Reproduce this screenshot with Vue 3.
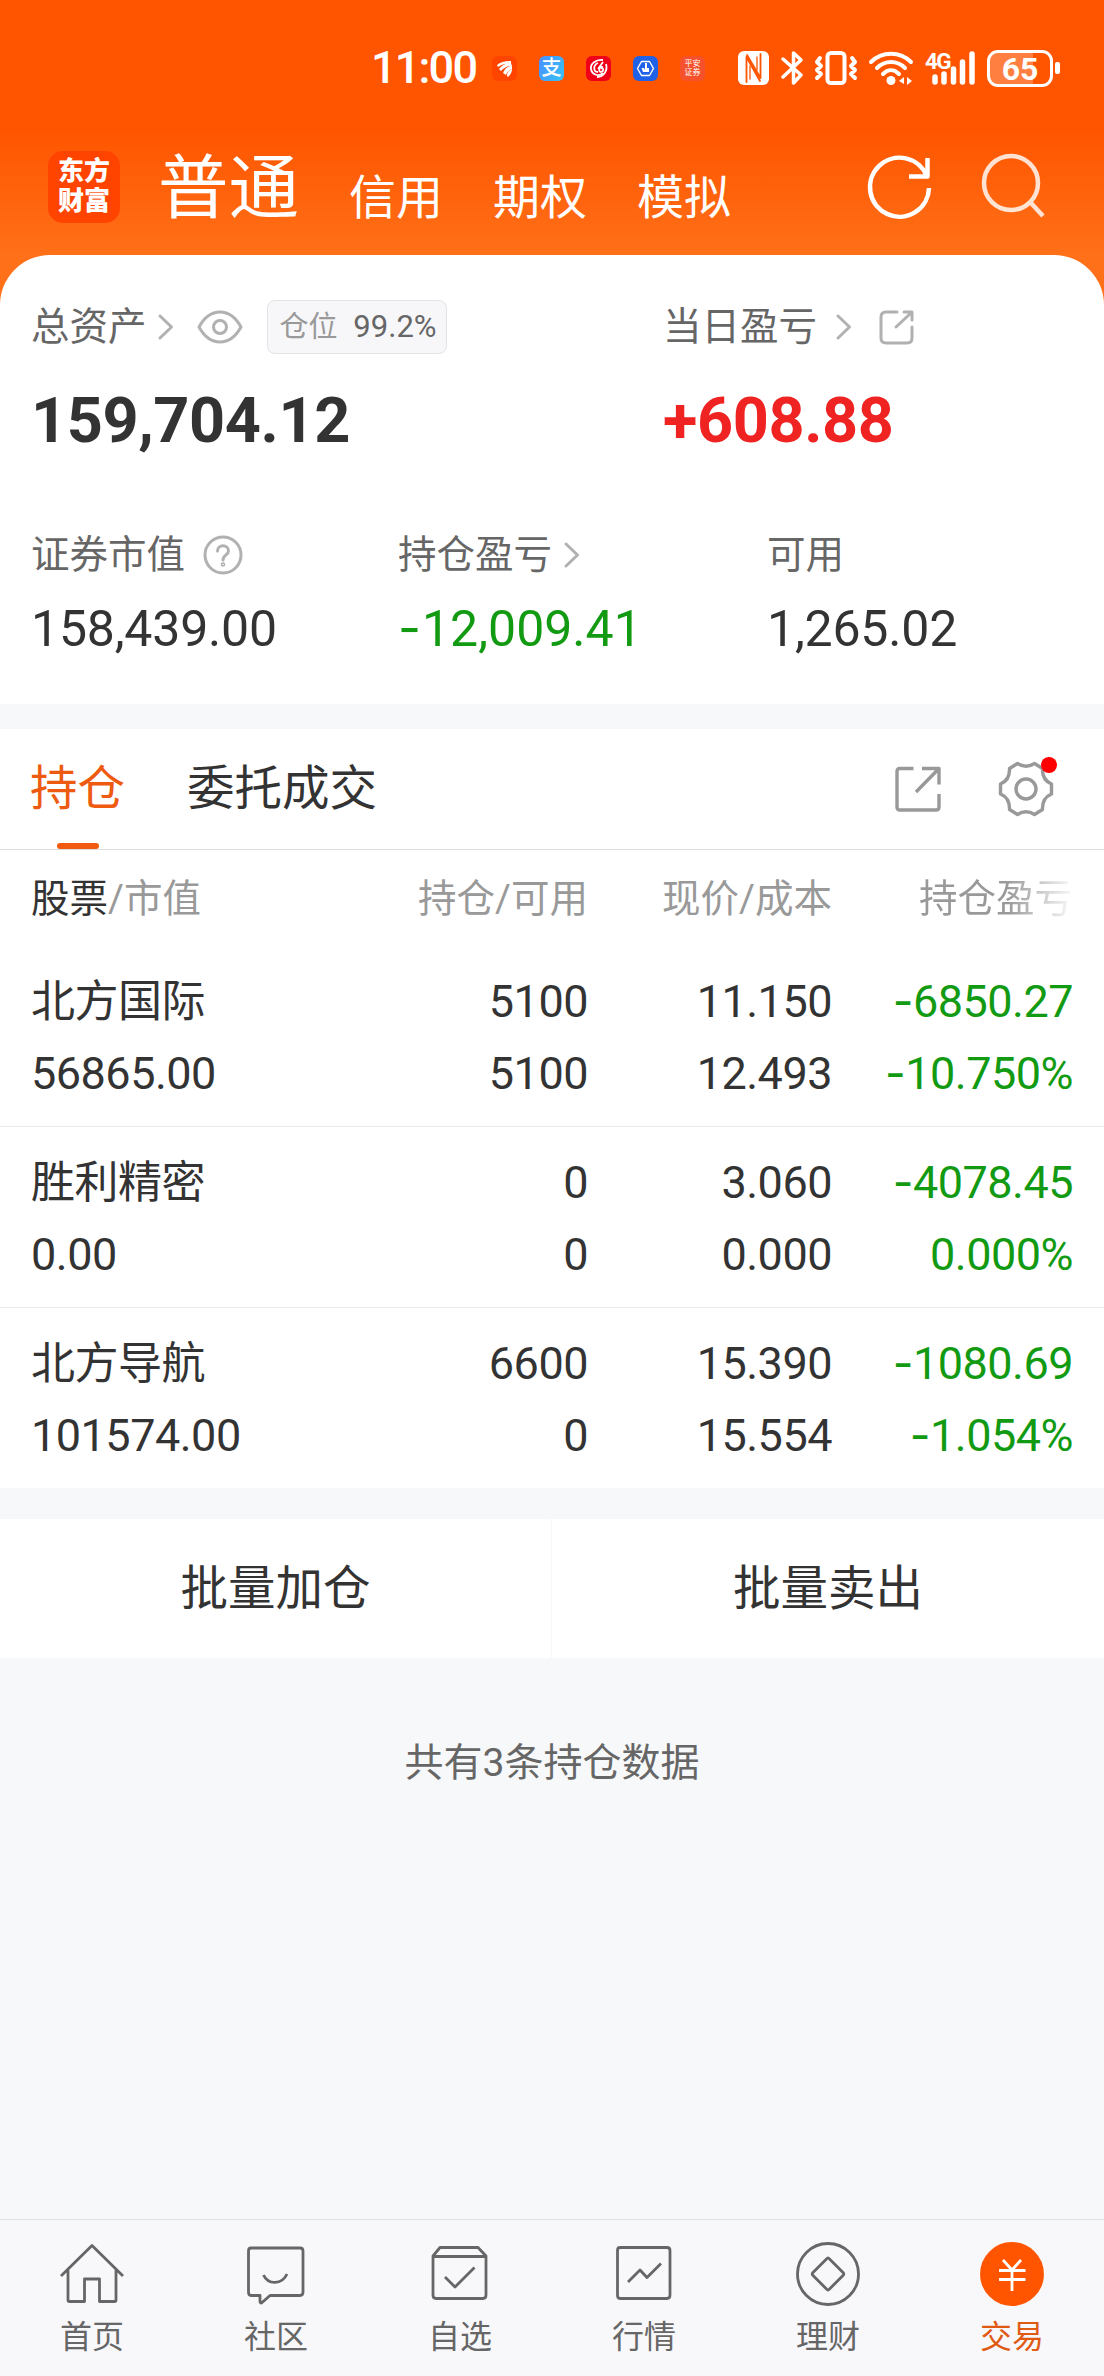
<template>
  <div class="page">
    <header class="top">
      <div class="status">
        <span class="clock">11:00</span>
        <div class="apps">
          <span class="app app-em">
            <svg viewBox="0 0 25 25">
              <path d="M5 9C8 6 13 5 19 5L19 8C13 7 9 9 6 11Z" />
              <path d="M7 13C10 9 14 7 19 7L20 10C15 10 12 12 9 15Z" />
              <path d="M11 17C13 12 16 10 20 10V13C17 14 15 16 14 19Z" />
              <path d="M15 20C15 16 17 14 20 13C20 16 19 18 16 21Z" />
            </svg>
          </span>
          <span class="app app-pay">支</span>
          <span class="app app-red">
            <svg viewBox="0 0 25 25" fill="none" stroke="#fff" stroke-width="1.8">
              <path d="M17 4C10 3 4 8 5 13C6 19 13 21 17 17" />
              <path d="M20 8C22 14 18 21 11 21" />
              <path d="M12 7C7 9 7 16 12 16M17 6L12 13M17 11C13 10 12 16 15 16C18 15 18 12 15 12" />
            </svg>
          </span>
          <span class="app app-blue">
            <svg viewBox="0 0 25 25">
              <path d="M8.5 5.5H16.5L20.5 12.5L16.5 19.5H8.5L4.5 12.5Z" fill="none" stroke="#fff" stroke-width="1.4" />
              <path d="M12 7H14V12H16V16H10L8.5 12H11L12 14Z" />
            </svg>
          </span>
          <span class="app app-pa">平安<br />证券</span>
        </div>
        <div class="signals">
          <svg class="nfc" viewBox="0 0 31 34">
            <rect width="31" height="34" rx="6" fill="#fff" />
            <path d="M8.5 31V6L22 30M22.5 3V27L9 4" fill="none" stroke="#ff5500" stroke-width="1.8" />
            <path d="M12 15V28M19 19V6" fill="none" stroke="#ff5500" stroke-width="1.3" />
          </svg>
          <svg class="bt" viewBox="0 0 22 34">
            <path d="M2 8L20 24L12.500 32V2L20 9L2 26" />
          </svg>
          <svg class="vibrate" viewBox="0 0 42 34">
            <rect x="12.500" y="2" width="17" height="30" rx="3.500" />
            <path d="M5 7L2 11L6 15L2 19L6 23L2 27M37 7L40 11L36 15L40 19L36 23L40 27" />
          </svg>
          <svg class="wifi" viewBox="0 0 44 34">
            <path d="M2 11C13 0 31 0 42 11M8 17C16 9 28 9 36 17M14 23C19 18 25 18 30 23" />
            <circle cx="22" cy="29.500" r="4.500" class="solid" />
            <path d="M30 30L35 26V33ZM43 30L38 26V34Z" class="solid" />
          </svg>
          <svg class="cell" viewBox="0 0 50 34">
            <text x="0" y="17.5">4G</text>
            <path d="M10 26V31M19 23V31M28.500 18V31M37.500 11V31M47 3V31" />
          </svg>
          <div class="battery">65</div>
          <i class="nub"></i>
        </div>
      </div>

      <div class="nav">
        <div class="logo">东方<br />财富</div>
        <nav class="accounts">
          <span class="current">普通</span>
          <span>信用</span>
          <span>期权</span>
          <span>模拟</span>
        </nav>
        <svg class="refresh" viewBox="0 0 66 66">
          <path d="M61 33A29.500 29.500 0 1 1 59 21.500" />
          <path d="M59.500 3V21.500H41" />
        </svg>
        <svg class="search" viewBox="0 0 66 66">
          <circle cx="30" cy="29" r="27" />
          <path d="M50 49L62 62" />
        </svg>
      </div>
    </header>

    <section class="summary">
      <div class="totals">
        <div>
          <div class="label">
            <span>总资产</span>
            <svg class="chevron" viewBox="0 0 16 26"><path d="M2 2L13.500 13L2 24" /></svg>
            <svg class="eye" viewBox="0 0 46 34">
              <path d="M2 17C13 -3 33 -3 44 17C33 37 13 37 2 17Z" />
              <circle cx="23" cy="17" r="6.500" />
            </svg>
            <span class="badge">仓位<b>99.2%</b></span>
          </div>
          <div class="big">159,704.12</div>
        </div>
        <div>
          <div class="label">
            <span>当日盈亏</span>
            <svg class="chevron day" viewBox="0 0 16 26"><path d="M2 2L13.500 13L2 24" /></svg>
            <svg class="share-sm" viewBox="0 0 36 36">
              <path d="M18 3H7Q2 3 2 8V29Q2 34 7 34H28Q33 34 33 29V18M25 3H33V11M33 3L17 18" />
            </svg>
          </div>
          <div class="big up">+608.88</div>
        </div>
      </div>

      <div class="details">
        <div>
          <div class="label">
            <span>证券市值</span>
            <svg class="help" viewBox="0 0 40 40">
              <circle cx="20" cy="20" r="18" />
              <path d="M14.500 16C14.500 9 25.500 9 25.500 16C25.500 20 20 20 20 25" />
              <circle cx="20" cy="29.500" r="0.800" />
            </svg>
          </div>
          <div class="mid">158,439.00</div>
        </div>
        <div>
          <div class="label">
            <span>持仓盈亏</span>
            <svg class="chevron pos" viewBox="0 0 16 26"><path d="M2 2L13.500 13L2 24" /></svg>
          </div>
          <div class="mid down"><i class="minus">-</i>12,009.41</div>
        </div>
        <div>
          <div class="label"><span>可用</span></div>
          <div class="mid">1,265.02</div>
        </div>
      </div>
    </section>

    <section class="holdings">
      <div class="tabs">
        <span class="tab active">持仓</span>
        <span class="tab">委托成交</span>
        <svg class="share" viewBox="0 0 46 46">
          <path d="M18.500 2.500H5Q2 2.500 2 5.500V41Q2 44 5 44H41Q44 44 44 41V28M27 2.500H44V18.500M43 3.500L21 26" />
        </svg>
        <span class="gear">
          <svg viewBox="0 0 56 56">
            <path d="M19.500 2.500Q28 8 36.500 2.500L44.500 7.500Q44 19 53.500 23V33Q44 37 44.500 48.500L36.500 53.500Q28 48 19.500 53.500L11.500 48.500Q12 37 2.500 33V23Q12 19 11.500 7.500Z" />
            <circle cx="28" cy="28" r="10" />
          </svg>
          <i class="dot"></i>
        </span>
      </div>

      <div class="row head">
        <span><em>股票</em>/市值</span>
        <span>持仓/可用</span>
        <span>现价/成本</span>
        <span class="fade">持仓盈亏</span>
      </div>

      <div v-for="item in stocks" :key="item.name" class="row stock">
        <span class="name">{{ item.name }}</span>
        <span>{{ item.amount }}</span>
        <span>{{ item.price }}</span>
        <span class="down"><i class="minus">-</i>{{ item.profit }}</span>
        <span>{{ item.value }}</span>
        <span>{{ item.available }}</span>
        <span>{{ item.cost }}</span>
        <span class="down"><i v-if="item.loss" class="minus">-</i>{{ item.rate }}</span>
      </div>
    </section>

    <div class="batch">
      <button type="button">批量加仓</button>
      <button type="button">批量卖出</button>
    </div>

    <p class="count">共有3条持仓数据</p>

    <footer class="tabbar">
      <div v-for="tab in tabs" :key="tab.label" class="item" :class="{ on: tab.on }">
        <svg viewBox="0 0 64 64">
          <circle v-if="tab.circle" cx="32" cy="32" r="30.500" />
          <path :d="tab.path" />
        </svg>
        <span>{{ tab.label }}</span>
      </div>
    </footer>
  </div>
</template>

<script setup>
const stocks = [
  {
    name: "北方国际",
    value: "56865.00",
    amount: "5100",
    available: "5100",
    price: "11.150",
    cost: "12.493",
    profit: "6850.27",
    rate: "10.750%",
    loss: true,
  },
  {
    name: "胜利精密",
    value: "0.00",
    amount: "0",
    available: "0",
    price: "3.060",
    cost: "0.000",
    profit: "4078.45",
    rate: "0.000%",
    loss: false,
  },
  {
    name: "北方导航",
    value: "101574.00",
    amount: "6600",
    available: "0",
    price: "15.390",
    cost: "15.554",
    profit: "1080.69",
    rate: "1.054%",
    loss: true,
  },
];

const tabs = [
  {
    label: "首页",
    path: "M1 34L32 3.500L63 34M8 28V58Q8 59.500 9.500 59.500H24.500V37H39.500V59.500H54.500Q56 59.500 56 58V28",
  },
  {
    label: "社区",
    path: "M7 6H56Q59 6 59 9V50Q59 53.500 56 53.500H26L17.500 61Q16 61 16 59V53.500H7Q4.500 53.500 4.500 50V9Q4.500 6 7 6M19.500 33C24 43 38 43 43 32",
  },
  {
    label: "自选",
    path: "M5 14L12 5.500H50L58 14V53Q58 56.500 55 56.500H8Q5 56.500 5 53ZM5 14.500H58M17 35L27 45L46.500 25.500",
  },
  {
    label: "行情",
    path: "M8 5.500H55Q58 5.500 58 8.500V53Q58 56.500 55 56.500H8Q5.500 56.500 5.500 53V8.500Q5.500 5.500 8 5.500M16 40L28 28L35 35.500L49 21.500",
  },
  {
    label: "理财",
    circle: true,
    path: "M30.500 17Q32 15 33.500 17L47 30.500Q48.500 32 47 33.500L33.500 47Q32 49 30.500 47L17 33.500Q15.500 32 17 30.500Z",
  },
  {
    label: "交易",
    circle: true,
    on: true,
    path: "M23 18L32 28L41 18M19 28.500H45.500M19 37.500H45.500M32 28V49",
  },
];
</script>

<style>
body {
  background: #f6f7f9;
}
</style>

<style scoped>
.page {
  display: flex;
  flex-direction: column;
  width: 1104px;
  height: 2376px;
  background: #f7f8fa;
  color: #333;
  font-family: Roboto, "Noto Sans CJK SC", sans-serif;
  overflow: hidden;
}

svg {
  display: block;
  flex: none;
  fill: none;
  stroke-linejoin: round;
  overflow: visible;
}

i,
em {
  font-style: normal;
}

.top {
  height: 315px;
  margin-bottom: -60px;
  background: linear-gradient(#ff5500 130px, #ff7018 255px);
  color: #fff;
}

.status {
  display: flex;
  align-items: center;
  height: 136px;
  padding-left: 371px;
}

.clock {
  width: 121px;
  font-size: 45px;
  font-weight: 500;
  letter-spacing: -1.8px;
  line-height: 50px;
}

.apps {
  display: flex;
  gap: 22px;
}

.app {
  width: 25px;
  height: 25px;
  border-radius: 6px;
  text-align: center;
}

.app svg path {
  fill: #fff;
}

.app-em {
  background: #ff4400;
}

.app-pay {
  background: linear-gradient(120deg, #4c8cff, #35c5f5);
  font-size: 20px;
  font-weight: 500;
  line-height: 25px;
}

.app-red {
  background: #f00018;
}

.app-red svg path {
  fill: none;
}

.app-blue {
  background: #1f62e8;
}

.app-blue svg path:first-child {
  fill: none;
}

.app-pa {
  background: #f4512c;
  font-size: 8px;
  line-height: 9px;
  padding-top: 3px;
  box-sizing: border-box;
}

.signals {
  display: flex;
  align-items: center;
  margin-left: 33px;
  stroke-linecap: round;
}

.signals svg {
  height: 34px;
  stroke: #fff;
  stroke-width: 4;
}

.signals .solid {
  fill: #fff;
  stroke: none;
}

.signals .nfc {
  width: 31px;
  stroke: none;
}

.signals .bt {
  width: 22px;
  margin-left: 12px;
  stroke-width: 3.5;
}

.vibrate {
  width: 42px;
  margin-left: 12px;
}

.wifi {
  width: 44px;
  margin-left: 12px;
}

.signals .cell {
  width: 50px;
  margin-left: 12px;
  stroke-width: 5.5;
}

.cell text {
  fill: #fff;
  stroke: none;
  font-size: 22.5px;
  font-weight: 700;
  letter-spacing: -1.6px;
}

.battery {
  width: 66px;
  height: 37px;
  margin-left: 12px;
  box-sizing: border-box;
  border: 3px solid #fff;
  border-radius: 11px;
  background: linear-gradient(90deg, #ff7f40 43px, transparent 43px);
  font-size: 32px;
  font-weight: 700;
  line-height: 32px;
  text-align: center;
}

.nub {
  width: 5px;
  height: 12px;
  margin-left: 2px;
  border-radius: 2px;
  background: #fff;
}

.nav {
  display: flex;
  align-items: center;
  height: 102px;
  padding-left: 48px;
}

.logo {
  width: 72px;
  height: 72px;
  padding-top: 5px;
  box-sizing: border-box;
  border-radius: 15px;
  background: #ff4400;
  font-size: 26px;
  font-weight: 900;
  line-height: 30px;
  text-align: center;
}

.accounts {
  display: flex;
  align-items: last baseline;
  width: 710px;
  margin-left: 38px;
  padding-top: 10px;
  gap: 50px;
  font-size: 47px;
  line-height: 84px;
}

.accounts span:not(.current) {
  padding-top: 2px;
  margin-bottom: -2px;
  transform: translateY(1px);
}

.current {
  font-size: 70.5px;
}

.refresh,
.search {
  width: 66px;
  height: 66px;
  stroke: #fff;
  stroke-width: 4.5;
}

.refresh {
  margin-top: 2px;
}

.search {
  margin-left: 47px;
  opacity: 0.82;
}

.summary {
  height: 449px;
  box-sizing: border-box;
  padding-top: 41px;
  border-radius: 50px 50px 0 0;
  background: #fff;
}

.totals {
  display: grid;
  grid-template-columns: 632px 1fr;
  height: 228px;
  padding-left: 31px;
}

.details {
  display: grid;
  grid-template-columns: 367px 369px 1fr;
  padding-left: 31px;
}

.label {
  display: flex;
  align-items: center;
  height: 62px;
  color: #666;
  font-size: 38.5px;
  line-height: 62px;
}

.label svg {
  stroke: #b1b1b1;
  stroke-width: 3;
  stroke-linecap: round;
}

.chevron {
  width: 16px;
  height: 26px;
  margin-left: 11px;
}

.chevron.day {
  margin-left: 19px;
}

.chevron.pos {
  margin-left: 12px;
}

.eye {
  width: 46px;
  height: 34px;
  margin-left: 23px;
}

.badge {
  display: flex;
  align-items: center;
  justify-content: space-between;
  width: 180px;
  height: 54px;
  margin-left: 24px;
  padding: 0 9px 0 12px;
  box-sizing: border-box;
  border: 1px solid #e3e3e5;
  border-radius: 8px;
  background: #f7f7fa;
  color: #999;
  font-size: 29px;
}

.badge b {
  color: #666;
  font-size: 31px;
  font-weight: 400;
}

.share-sm {
  width: 36px;
  height: 36px;
  margin-left: 27px;
}

.help {
  width: 40px;
  height: 40px;
  margin-left: 18px;
}

.big {
  margin-top: 31px;
  font-size: 63px;
  font-weight: 700;
  letter-spacing: -0.4px;
  line-height: 64px;
}

.mid {
  margin-top: 15px;
  font-size: 50px;
  line-height: 56px;
  letter-spacing: -0.2px;
}

.up {
  color: #f02323;
}

.down {
  color: #129a12;
}

.minus {
  font-family: Inter, sans-serif;
  line-height: 1;
}

.mid .minus {
  margin-right: 1px;
}

.mid.down {
  letter-spacing: 0;
}

.holdings {
  margin-top: 25px;
  background: #fff;
}

.tabs {
  display: flex;
  align-items: center;
  height: 121px;
  padding-left: 30px;
  box-sizing: border-box;
  border-bottom: 1px solid #ddd;
}

.tab {
  position: relative;
  margin-right: 62px;
  font-size: 47.5px;
  line-height: 120px;
}

.tab.active {
  color: #ee5a10;
}

.tab.active::after {
  content: "";
  position: absolute;
  left: 27px;
  bottom: 0;
  width: 42px;
  height: 6px;
  border-radius: 3px;
  background: #f25a10;
}

.share,
.gear svg {
  stroke: #999;
  stroke-width: 3.4;
}

.share {
  width: 46px;
  height: 46px;
  margin-left: auto;
}

.gear {
  position: relative;
  margin: 0 50px 0 57px;
}

.gear svg {
  width: 56px;
  height: 56px;
}

.dot {
  position: absolute;
  top: -4px;
  right: -3px;
  width: 16px;
  height: 16px;
  border-radius: 50%;
  background: #f00;
}

.row {
  display: grid;
  grid-template-columns: 300px 257px 244px 241px;
  padding-left: 31px;
  text-align: right;
}

.row > :nth-child(4n + 1) {
  text-align: left;
}

.head {
  height: 96px;
  color: #999;
  font-size: 38.5px;
  line-height: 98px;
}

.head em {
  color: #333;
}

.fade {
  background: linear-gradient(90deg, #999 175px, #fff 245px);
  background-clip: text;
  color: transparent;
}

.stock {
  grid-auto-rows: 72px;
  height: 181px;
  box-sizing: border-box;
  padding-top: 19px;
  border-bottom: 1px solid #ebebeb;
  font-size: 45px;
  letter-spacing: -0.5px;
  line-height: 74px;
}

.stock:last-child {
  height: 180px;
  border-bottom: none;
}

.name {
  font-size: 44px;
}

.batch {
  display: grid;
  grid-template-columns: 551px 552px;
  gap: 1px;
  height: 139px;
  margin-top: 31px;
}

.batch button {
  padding: 0 0 8px;
  border: none;
  background: #fff;
  color: #333;
  font-family: inherit;
  font-size: 47.5px;
}

.count {
  margin: 73px 0 0;
  color: #666;
  font-size: 39px;
  line-height: 64px;
  text-align: center;
}

.tabbar {
  display: grid;
  grid-template-columns: repeat(6, 1fr);
  height: 157px;
  margin-top: auto;
  box-sizing: border-box;
  padding-top: 22px;
  border-top: 1px solid #e2e3e6;
  background: #f8f8fb;
}

.item {
  display: flex;
  flex-direction: column;
  align-items: center;
  color: #666;
  font-size: 32px;
  line-height: 62px;
}

.item svg {
  width: 64px;
  height: 64px;
  stroke: #666;
  stroke-width: 2.8;
}

.item.on {
  color: #e05a14;
}

.item.on svg {
  stroke: #fff;
}

.item.on circle {
  fill: #ff5500;
  stroke: #ff5500;
}
</style>
